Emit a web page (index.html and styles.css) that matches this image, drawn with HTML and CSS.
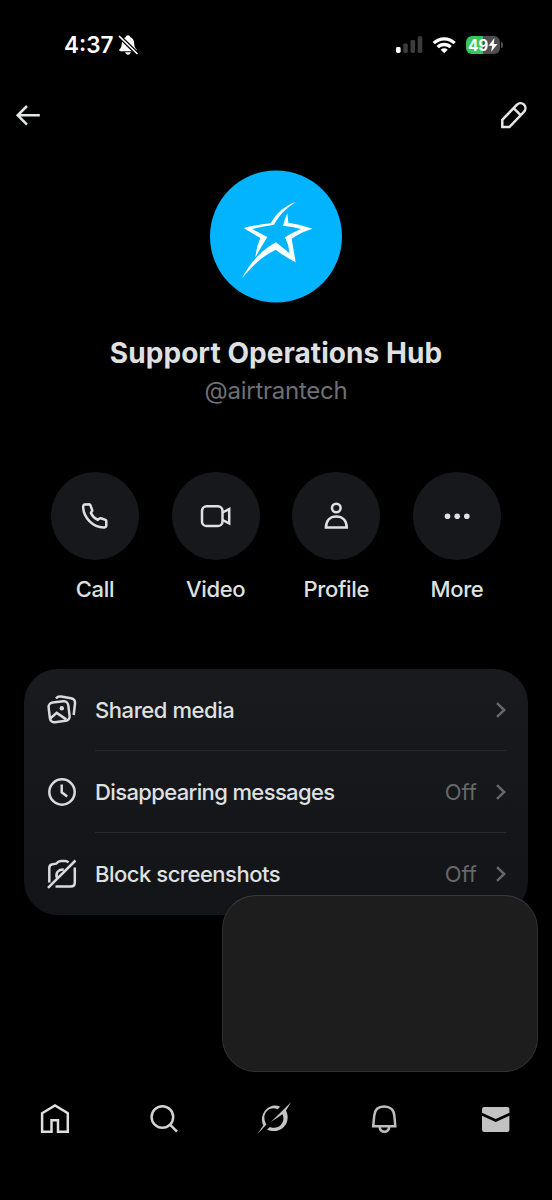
FILE: index.html
```html
<!DOCTYPE html>
<html lang="en">
<head>
<meta charset="utf-8">
<title>Support Operations Hub</title>
<link rel="stylesheet" href="styles.css">
</head>
<body>
<div class="screen">
  <header class="status">
    <div class="clock"><span class="time">4:37</span>
      <svg width="22" height="22" viewBox="118 34 22 22"><path d="M129 35.3c-1.3 0-2 .8-2.1 1.8-2.8 1-4 3.300-4.100 6.400-.1 3.200-.8 4.300-2.200 5.700-.8.8-.4 2 .8 2h15.200c1.200 0 1.600-1.200.8-2-1.400-1.400-2.100-2.500-2.200-5.700-.1-3.100-1.300-5.400-4.100-6.400-.1-1-.8-1.800-2.100-1.800zM126.200 52.300h5.600c-.3 1.500-1.300 2.400-2.800 2.400s-2.500-.9-2.800-2.400z" fill="#fff"/><path d="M120.500 36.500l17.500 17" stroke="#000" stroke-width="4"/><path d="M120.500 36.500l17.500 17" stroke="#fff" stroke-width="1.700" stroke-linecap="round"/></svg>
    </div>
    <div class="indicators">
      <svg width="28" height="20" viewBox="395 35 28 20"><rect x="396" y="47" width="4.600" height="6" rx="1.400" fill="#fff"/><g fill="#3b3b3d"><rect x="403.200" y="43.500" width="4.600" height="9.500" rx="1.400"/><rect x="410.500" y="40" width="4.600" height="13" rx="1.400"/><rect x="417.700" y="36.300" width="4.600" height="16.700" rx="1.400"/></g></svg>
      <svg width="24" height="20" viewBox="432 35 24 20" fill="none" stroke="#fff" stroke-width="3.300"><path d="M433.800 43.200a14.700 14.700 0 0 1 20.800 0M437.700 47.200a9.200 9.200 0 0 1 13 0"/><path d="M444.200 53.300l-3.500-3.500a5 5 0 0 1 7 0z" fill="#fff" stroke="none"/></svg>
      <div class="power"><div class="battery"><span>49</span><svg width="10" height="14" viewBox="0 0 10 14"><path d="M6.500 0L.5 7.700h3.700L3 14l6.500-8H5.700z" fill="#fff"/></svg></div><i class="nub"></i></div>
    </div>
  </header>
  <nav class="topbar">
    <svg width="26" height="24" viewBox="15 103 26 24" fill="none" stroke="#e4e5e6" stroke-width="2.500"><path d="M39.800 115.300H18M27 106l-9.300 9.300L27 124.600"/></svg>
    <svg width="28" height="28" viewBox="500 101 28 28" fill="none" stroke="#e4e5e6" stroke-width="2.500"><path d="M502.300 127v-7.200l14.500-15c2.200-2.200 5.300-2 7.200-.1s1.900 5-.1 7.100l-14.500 15.200zM513.800 108.300l6.900 6.900"/></svg>
  </nav>
  <main>
    <section class="identity">
      <svg class="avatar" width="132" height="133" viewBox="30 30 396 399"><circle cx="228" cy="229.500" r="198" fill="#01b4fd"/><g fill="#fff"><path d="M287 126C251 140 231 157 212 190Q169 194 131 204L181 234Q169 260 166 292Q183 261 202 231L157 207Q187 199 222 194C239 163 257 146 287 126z"/><path d="M262 160L265 188Q303 193 337 206Q303 216 275 236L287 307Q257 292 227 269C190 287 161 313 126 355C151 306 188 268 228 247L269 280Q267 256 255 232Q278 217 303 207Q277 199 249 197Q254 177 262 160z"/></g></svg>
      <h1>Support Operations Hub</h1>
      <p class="handle">@airtrantech</p>
    </section>
    <section class="actions">
      <div class="action"><div class="disc"><svg width="30" height="30" viewBox="80 500 30 30"><path d="M84.200 503.500L89 503.300Q90 503.400 90.400 504.300L92.200 509Q92.400 510 91.500 510.800L90.900 512Q92.800 516.500 97.700 518.900L99.200 517.700Q100 517.100 101 517.300L105.500 518.900Q106.400 519.300 106.300 520.200V524.500Q106.200 526.300 104.400 526.400C93 526.800 82.900 516.200 83.200 505.200Q83.200 504 84.200 503.500z"/></svg></div><span>Call</span></div>
      <div class="action"><div class="disc"><svg width="32" height="26" viewBox="200 502 32 26"><rect x="202" y="505.300" width="20.500" height="19.800" rx="4.700"/><path d="M222.600 511.500l6.600-3.400v14.300l-6.600-3.400"/></svg></div><span>Video</span></div>
      <div class="action"><div class="disc"><svg width="28" height="30" viewBox="322 500 28 30"><circle cx="336.300" cy="507" r="4.300"/><path d="M325.900 526.600c.2-6.800 4-11.200 10.400-11.200s10.300 4.400 10.500 11.200z"/></svg></div><span>Profile</span></div>
      <div class="action"><div class="disc"><svg class="dots" width="28" height="8" viewBox="443 511 28 8"><circle cx="447.500" cy="515.200" r="2.800"/><circle cx="457.200" cy="515.200" r="2.800"/><circle cx="466.800" cy="515.200" r="2.800"/></svg></div><span>More</span></div>
    </section>
    <section class="card">
      <div class="row">
        <svg class="icon" width="32" height="32" viewBox="46 694 32 32"><rect x="49.200" y="701.800" width="19.800" height="19.800" rx="4.500" transform="rotate(-7 59 711.700)"/><path d="M56 698.400q1.800-2.300 5-1.800l10 1.700q4.500.8 4 5.300l-1.300 11.400M50.500 718.200l6.200-5.300 9.600 6.500"/><circle cx="61.800" cy="708.200" r="2.200" fill="#d9dadb" stroke="none"/></svg>
        <div class="line"><span class="label media">Shared media</span><svg class="chevron" width="12" height="18" viewBox="0 0 12 18"><path d="M2 2.200L9.200 9 2 15.800"/></svg></div>
      </div>
      <div class="row">
        <svg class="icon" width="32" height="32" viewBox="46 776 32 32"><circle cx="62" cy="792" r="12.700"/><path d="M61.700 784.600v7.700l5.500 4.200"/></svg>
        <div class="line"><span class="label vanish">Disappearing messages</span><span class="value">Off</span><svg class="chevron" width="12" height="18" viewBox="0 0 12 18"><path d="M2 2.200L9.200 9 2 15.800"/></svg></div>
      </div>
      <div class="row">
        <svg class="icon" width="32" height="32" viewBox="46 858 32 32"><path d="M49.300 882.500v-14.700q0-3.300 3.300-3.600l3.500-.5q2.300-2.700 5-2.700h4.200q1.800 0 3.200 1.500M74.800 867.500v15q0 4-4 4H55.500M56.700 877.500c-1.300-5 2-8.300 7-8M48 887.800l27.500-27.300"/></svg>
        <div class="line"><span class="label block">Block screenshots</span><span class="value">Off</span><svg class="chevron" width="12" height="18" viewBox="0 0 12 18"><path d="M2 2.200L9.200 9 2 15.800"/></svg></div>
      </div>
    </section>
  </main>
  <div class="floating"></div>
  <nav class="tabs">
    <svg width="32" height="32" viewBox="39 1102 32 32" stroke="#dedede"><path d="M42.100 1113.200l12.900-7.800 12.800 7.800v18.600H58v-11.500h-6.500v11.500h-9.400z"/></svg>
    <svg width="32" height="32" viewBox="148 1102 32 32" stroke="#d2d2d2"><circle cx="162.400" cy="1117" r="10.800"/><path d="M170 1124.600l7 7"/></svg>
    <svg width="36" height="36" viewBox="256 1101 36 36" fill="#c5c5c5" stroke="none"><path d="M280.300 1107.700l-2.700 2.500c-8.500-3.700-16.500 4.800-12 13.700l.8 1.500L257 1135.400l6.300-8.800C258 1115.300 269 1102.500 280.300 1107.700zM291.200 1103l-5.200 8.500c6.400 13.200-6.700 25-19 19l2.900-2.600c8.500 3.700 16-4.200 12.700-12.700l-11.700 7.800z"/></svg>
    <svg width="32" height="32" viewBox="368 1102 32 32" stroke="#bdbdbd"><path d="M374.200 1115.800c.5-6.300 4.600-9.300 10-9.300s9.700 3 10.200 9.300l.9 10.400h-22.100zM379.500 1126.700q.8 5 4.900 5t4.900-5"/></svg>
    <svg width="32" height="32" viewBox="480 1102 32 32" fill="#c2c2c2" stroke="none"><path d="M482 1112.800v-3.500q0-2.200 2.200-2.200h23q2.200 0 2.200 2.200v3.500l-13.700 6.200zM482 1115.800l13.700 6.300 13.700-6.300v14q0 2.200-2.200 2.200h-23q-2.200 0-2.200-2.200z"/></svg>
  </nav>
</div>
</body>
</html>
```
FILE: styles.css
```css
* { box-sizing: border-box; }
body { margin: 0; background: #000; }
svg { display: block; flex: none; }
.screen {
  position: relative;
  width: 552px;
  height: 1200px;
  overflow: hidden;
  background: #000;
  color: #dfe0e1;
  font-family: Inter, "Liberation Sans", sans-serif;
}
.status {
  height: 90px;
  padding: 0 49px 0 64px;
  display: flex;
  justify-content: space-between;
}
.clock, .indicators { height: 90px; display: flex; align-items: center; }
.clock { gap: 4px; }
.time { padding-bottom: 1px; color: #fff; font-size: 22.500px; font-weight: 600; }
.indicators { gap: 9px; }
.power { display: flex; align-items: center; gap: 1px; }
.nub { width: 2px; height: 6px; border-radius: 0 2px 2px 0; background: #4d4d50; }
.battery {
  display: flex;
  align-items: center;
  justify-content: center;
  width: 34px;
  height: 18px;
  margin-left: 1px;
  border-radius: 6px;
  background: linear-gradient(90deg, #35c759 49%, #4d4d50 49%);
  color: #fff;
  font-size: 15.500px;
  font-weight: 700;
  letter-spacing: -.3px;
}
.topbar { height: 50px; padding: 0 24px 0 15px; display: flex; align-items: center; justify-content: space-between; }
.identity { display: flex; flex-direction: column; align-items: center; padding-top: 30px; }
h1 { margin: 30px 0 0; height: 40px; line-height: 40px; font-size: 28px; font-weight: 700; letter-spacing: .06px; white-space: nowrap; }
.handle { margin: 0; padding-top: 2px; line-height: 32px; color: #6d6f74; font-size: 24px; letter-spacing: -.25px; }
.actions { display: flex; justify-content: space-between; padding: 64.500px 51px 0; }
.action { width: 88px; display: flex; flex-direction: column; align-items: center; font-size: 22px; font-weight: 500; line-height: 30px; letter-spacing: -.35px; }
.disc { width: 88px; height: 88px; margin-bottom: 14.500px; border-radius: 50%; background: #17181b; display: flex; align-items: center; justify-content: center; }
.disc svg { fill: none; stroke: #dfe0e1; stroke-width: 2.500; }
.disc .dots { fill: #dfe0e1; stroke: none; }
.card { width: 504px; height: 246px; margin: 65px auto 0; padding: 0 22px; border-radius: 34px; background: linear-gradient(#191a1d, #131418); }
.row { display: flex; height: 82px; align-items: center; }
.icon { margin-right: 17px; fill: none; stroke: #d9dadb; stroke-width: 2.500; }
.line { display: flex; flex: 1; align-items: center; height: 82px; border-bottom: 1px solid #292a2d; }
.row:last-child .line { border: 0; }
.label { flex: 1; font-size: 22px; font-weight: 500; white-space: nowrap; }
.media { letter-spacing: -.43px; }
.vanish { letter-spacing: -.63px; }
.block { letter-spacing: -.48px; }
.value { margin-right: 18px; font-size: 22px; color: #65676b; }
.chevron { margin-right: -1px; fill: none; stroke: #65676b; stroke-width: 2.500; }
.floating { position: absolute; left: 222px; top: 895px; width: 316px; height: 177px; border: 1px solid #303033; border-top-color: #3a3a3f; border-radius: 34px; background: #1d1d1e; }
.tabs { display: grid; grid-template-columns: 109px 108px 112px 112px 32px; align-items: center; margin-top: 185px; height: 36px; padding-left: 39px; fill: none; stroke-width: 2.500; }
```
